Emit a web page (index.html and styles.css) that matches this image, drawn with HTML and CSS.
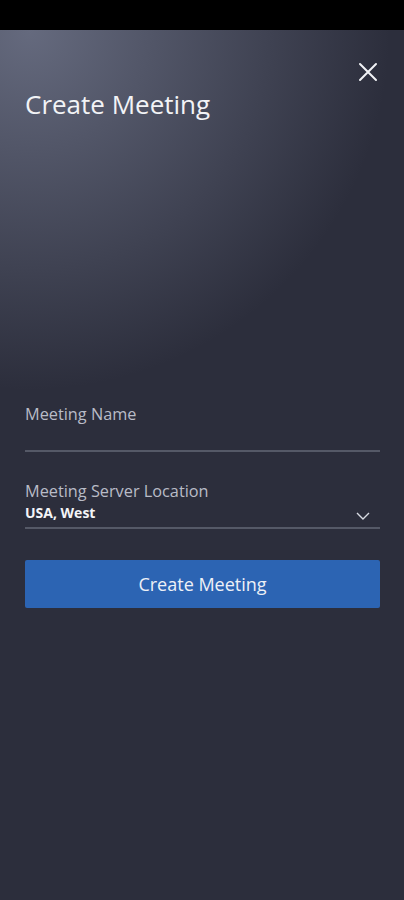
FILE: index.html
```html
<!DOCTYPE html>
<html lang="en">
<head>
    <meta charset="UTF-8">
    <meta name="viewport" content="width=device-width, initial-scale=1.0">
    <title>Create Meeting</title>
    <link rel="stylesheet" href="styles.css">
</head>
<body>

    <div class="status-bar"></div>

    <div class="screen">
        <div class="top-row">
            <button class="close-btn" aria-label="Close">
                <svg width="20" height="20" viewBox="0 0 20 20">
                    <path d="M2 2 L18 18 M18 2 L2 18" stroke="#f2f3f6" stroke-width="2" stroke-linecap="round"/>
                </svg>
            </button>
        </div>

        <h1 class="title">Create Meeting</h1>

        <div class="form">
            <div class="field">
                <label for="name">Meeting Name</label>
                <input type="text" id="name">
            </div>

            <div class="field select-field">
                <label>Meeting Server Location</label>
                <div class="select-row">
                    <span class="select-value">USA, West</span>
                    <svg width="14" height="8" viewBox="0 0 14 8">
                        <path d="M1 1 L7 7 L13 1" stroke="#d8dbe3" stroke-width="1.4" fill="none"/>
                    </svg>
                </div>
            </div>

            <button class="create-btn">Create Meeting</button>
        </div>
    </div>

</body>
</html>
```

FILE: styles.css
```css
body {
    margin: 0;
    padding: 0;
    font-family: "Open Sans", "Noto Sans", sans-serif;
    background: #2c2e3c;
    color: #fff;
}

.status-bar {
    height: 30px;
    background: #000;
}

.screen {
    height: 870px;
    padding: 0 24px 0 25px;
    background:
        radial-gradient(ellipse 360px 360px at 30px 0px, rgba(120, 126, 148, 0.75), rgba(120, 126, 148, 0) 100%),
        #2c2e3c;
}

.top-row {
    display: flex;
    justify-content: flex-end;
    padding-top: 32px;
}

.close-btn {
    background: none;
    border: none;
    padding: 0;
    margin-right: 2px;
    width: 20px;
    height: 20px;
    cursor: pointer;
}

.title {
    margin: 0;
    margin-top: 4px;
    font-size: 26px;
    font-weight: 400;
    color: #f2f3f6;
    line-height: 36px;
}

.form {
    margin-top: 282px;
}

.field label {
    display: block;
    font-size: 16.3px;
    color: #b9bcc7;
    line-height: 20px;
}

.field input {
    display: block;
    width: 100%;
    box-sizing: border-box;
    background: transparent;
    border: none;
    border-bottom: 2px solid #555967;
    height: 28px;
    outline: none;
    color: #fff;
    font-size: 15px;
}

.select-field {
    margin-top: 29px;
}

.select-row {
    display: flex;
    align-items: center;
    justify-content: space-between;
    padding: 3px 10px 5px 0;
    border-bottom: 2px solid #555967;
}

.select-value {
    font-size: 14px;
    font-weight: 700;
    color: #f4f5f8;
    line-height: 18px;
}

.select-row svg {
    margin-top: 6px;
}

.create-btn {
    display: block;
    width: 100%;
    height: 48px;
    margin-top: 31px;
    background: #2c64b3;
    border: none;
    border-radius: 2px;
    color: #eef1f7;
    font-family: "Open Sans", "Noto Sans", sans-serif;
    font-size: 18px;
    cursor: pointer;
}
```
